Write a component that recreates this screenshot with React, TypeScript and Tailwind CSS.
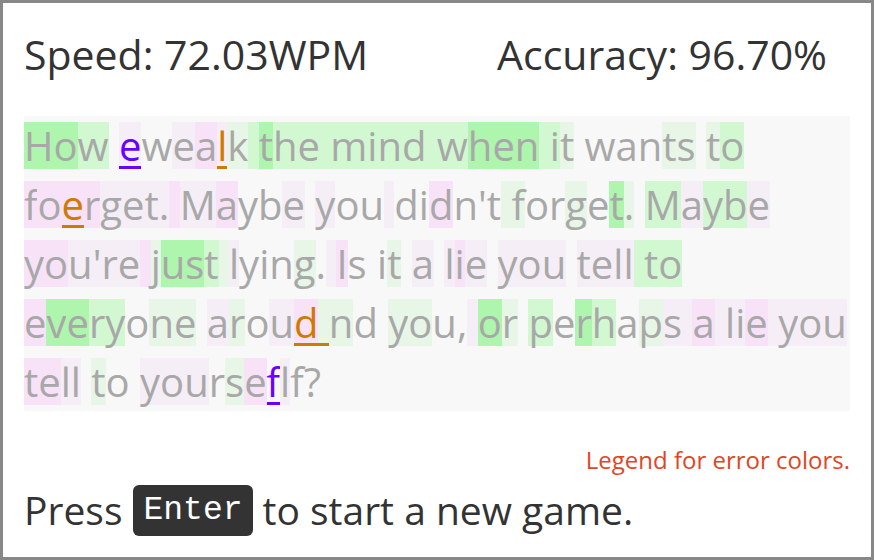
import { Fragment } from 'react';

// per-char heat: G strong green, g green, l pale green, P pink, p pale pink, . none
// marks: u = extra char (purple), o = wrong char (orange)
const lines: { text: string; heat: string; marks: Record<number, 'u' | 'o'> }[] = [
  {
    text: 'How ewealk the mind when it wants to',
    heat: 'GGg.' + 'p.pPpl' + 'gG' + 'gggggggg' + 'g' + 'GGG' + 'ggl' + '....' + 'll' + '.' + 'lg',
    marks: { 4: 'u', 8: 'o' },
  },
  {
    text: "foerget. Maybe you didn't forget. Maybe",
    heat: 'PPPP' + 'pppp' + 'P' + 'pP' + '..' + 'p' + '.' + 'p..' + 'p' + '..P...' + 'l' + 'l..l.Gl' + '.' + 'gpggp',
    marks: { 2: 'o' },
  },
  {
    text: "you're just lying. Is it a lie you tell to",
    heat:
      'PPpppp' + 'P' + 'lGGg' + 'l' + 'p...l.' + 'p' + 'P.' + '.' + '.l' + '.' + 'p' + '.' + 'pPp' + '.' + 'ppp' + '.' + 'pppp' + 'g' + 'gg',
    marks: {},
  },
  {
    text: 'everyone aroud nd you, or perhaps a lie you',
    heat:
      'PGGgg.ll' + '.' + 'pl.pP' + 'l' + 'l.' + '.' + 'll..' + 'p' + 'Gl' + '.' + 'g.Gg.lp' + 'p' + 'P' + 'p' + 'ppP' + 'p' + 'ppp',
    marks: { 13: 'o', 14: 'o' },
  },
  {
    text: 'tell to yourseflf?',
    heat: 'PPpp' + '.' + 'l.' + '.' + 'ppp' + '.' + 'lP' + '.' + 'p' + '..',
    marks: { 14: 'u' },
  },
];

const heatBg: Record<string, string> = {
  G: 'bg-[#aef5ae]',
  g: 'bg-[#d2f8d2]',
  l: 'bg-[#e7f6e7]',
  P: 'bg-[#f8e2f8]',
  p: 'bg-[#f6eef6]',
  '.': '',
};

function Char({ ch, heat, mark }: { ch: string; heat: string; mark?: 'u' | 'o' }) {
  const markCls =
    mark === 'u'
      ? 'text-[#6a00ff] shadow-[inset_0_-3px_0_#6a00ff]'
      : mark === 'o'
        ? 'text-[#d07a00] shadow-[inset_0_-3px_0_#d07a00]'
        : '';
  return (
    <span className={`inline-block h-[47px] leading-[47px] whitespace-pre ${heatBg[heat] ?? ''} ${markCls}`}>
      {ch}
    </span>
  );
}

export default function App() {
  return (
    <div
      className="w-[874px] h-[560px] border-[3px] border-[#888] bg-white px-[21px] text-[#333]"
      style={{ fontFamily: '"Open Sans", sans-serif' }}
    >
      <div className="flex justify-between pt-[31px] pr-[23px] text-[41px] leading-[41px]">
        <span>Speed: 72.03WPM</span>
        <span>Accuracy: 96.70%</span>
      </div>

      <div className="mt-[41px] bg-[#f8f8f8] text-[40px] text-[#a8a8a8]">
        {lines.map((line, i) => (
          <div key={i} className="flex h-[59px] items-center whitespace-nowrap">
            {line.text.split('').map((ch, j) => (
              <Fragment key={j}>
                <Char ch={ch} heat={line.heat[j] ?? '.'} mark={line.marks[j]} />
              </Fragment>
            ))}
          </div>
        ))}
      </div>

      <div className="mt-[37px] text-right text-[24px] leading-[24px] text-[#e2461f]">Legend for error colors.</div>

      <div className="mt-[13px] flex h-[51px] items-center text-[39px]">
        <span>Press</span>
        <kbd
          className="ml-[11px] flex h-[51px] items-center rounded-md bg-[#333] px-[10px] text-[33px] text-white"
          style={{ fontFamily: '"Liberation Mono", monospace' }}
        >
          Enter
        </kbd>
        <span className="ml-[10px]">to start a new game.</span>
      </div>
    </div>
  );
}
